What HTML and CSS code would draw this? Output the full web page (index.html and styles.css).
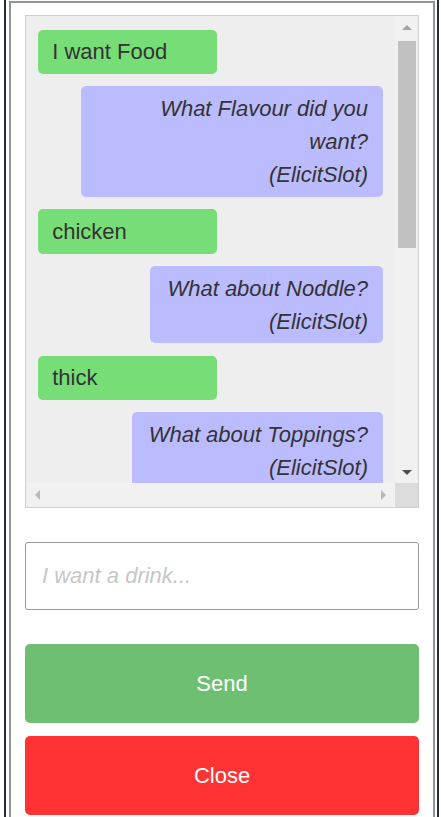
FILE: index.html
```html
<!DOCTYPE html>
<html>
<head>
<meta charset="utf-8">
<link rel="stylesheet" href="styles.css">
</head>
<body>
<div class="frame">
  <div class="panel">
    <div class="chat">
      <div class="chat-main">
        <div class="messages">
          <div class="msg user">I want Food</div>
          <div class="msg bot">What Flavour did you want?<br>(ElicitSlot)</div>
          <div class="msg user">chicken</div>
          <div class="msg bot">What about Noddle?<br>(ElicitSlot)</div>
          <div class="msg user">thick</div>
          <div class="msg bot">What about Toppings?<br>(ElicitSlot)</div>
        </div>
        <div class="vscroll">
          <div class="sbtn"><span class="tri up"></span></div>
          <div class="thumb"></div>
          <div class="track"></div>
          <div class="sbtn"><span class="tri down"></span></div>
        </div>
      </div>
      <div class="hrow">
        <div class="hscroll">
          <span class="tri left"></span>
          <span class="tri right"></span>
        </div>
        <div class="corner"></div>
      </div>
    </div>
    <input class="entry" type="text" placeholder="I want a drink...">
    <button class="btn send">Send</button>
    <button class="btn close">Close</button>
  </div>
</div>
</body>
</html>
```

FILE: styles.css
```css
html, body {
  margin: 0;
  padding: 0;
  background: #ffffff;
  overflow: hidden;
}
body {
  font-family: "Liberation Sans", Arial, sans-serif;
  width: 441px;
  height: 817px;
}
.frame {
  margin-left: 4px;
  width: 431px;
  height: 816px;
  border-left: 2px solid #242d3e;
  border-right: 2px solid #242d3e;
  padding-top: 1px;
  overflow: hidden;
}
.panel {
  margin-left: 3px;
  margin-right: 2px;
  border: 2px solid #8e939c;
  border-bottom: none;
  padding: 12px 14px 0 14px;
  height: 802px;
}
.chat {
  box-sizing: border-box;
  height: 493px;
  border: 1px solid #cfcfcf;
  background: #eeeeee;
  display: flex;
  flex-direction: column;
}
.chat-main {
  flex: 1;
  display: flex;
  min-height: 0;
}
.messages {
  flex: 1;
  overflow: hidden;
  padding: 13.5px 12.5px 0 11.7px;
  display: flex;
  flex-direction: column;
  gap: 12.3px;
}
.msg {
  font-size: 22px;
  line-height: 33px;
  color: #333333;
  padding: 5.75px 14.5px;
  border-radius: 5px;
  flex-shrink: 0;
}
.user {
  background: #77dd77;
  width: 179px;
  box-sizing: border-box;
  align-self: flex-start;
}
.bot {
  background: #bbbbff;
  font-style: italic;
  text-align: right;
  align-self: flex-end;
  max-width: 302px;
  padding-left: 17px;
  box-sizing: border-box;
}
.vscroll {
  width: 23px;
  background: #f1f1f1;
  display: flex;
  flex-direction: column;
}
.sbtn {
  height: 22px;
  display: flex;
  align-items: center;
  justify-content: center;
  flex-shrink: 0;
}
.thumb {
  margin: 3px 2px 0 3px;
  height: 207px;
  background: #c1c1c1;
  flex-shrink: 0;
}
.track {
  flex: 1;
}
.tri {
  display: block;
  width: 0;
  height: 0;
}
.tri.up {
  border-left: 5px solid transparent;
  border-right: 5px solid transparent;
  border-bottom: 5px solid #a3a3a3;
}
.tri.down {
  border-left: 5px solid transparent;
  border-right: 5px solid transparent;
  border-top: 5px solid #505050;
}
.tri.left {
  border-top: 5px solid transparent;
  border-bottom: 5px solid transparent;
  border-right: 5px solid #b8b8b8;
}
.tri.right {
  border-top: 5px solid transparent;
  border-bottom: 5px solid transparent;
  border-left: 5px solid #b8b8b8;
}
.hrow {
  height: 24px;
  display: flex;
}
.hscroll {
  flex: 1;
  background: #f1f1f1;
  display: flex;
  align-items: center;
  justify-content: space-between;
  padding: 0 9px 0 9px;
}
.corner {
  width: 23px;
  background: #dcdcdc;
}
.entry {
  display: block;
  box-sizing: border-box;
  width: 394px;
  height: 68px;
  margin: 34px 0 0 0;
  border: 1px solid #9a9a9a;
  border-radius: 3px;
  padding: 0 16px;
  font-family: "Liberation Sans", Arial, sans-serif;
  font-size: 22px;
  color: #333333;
  background: #ffffff;
  outline: none;
}
.entry::placeholder {
  color: #c6c6c6;
  font-style: italic;
}
.btn {
  display: block;
  width: 394px;
  height: 79px;
  border: none;
  border-radius: 5px;
  color: #ffffff;
  font-family: "Liberation Sans", Arial, sans-serif;
  font-size: 22px;
  padding: 0;
}
.send {
  margin-top: 34px;
  background: #6fbf73;
}
.close {
  margin-top: 13px;
  background: #ff3333;
}
```
